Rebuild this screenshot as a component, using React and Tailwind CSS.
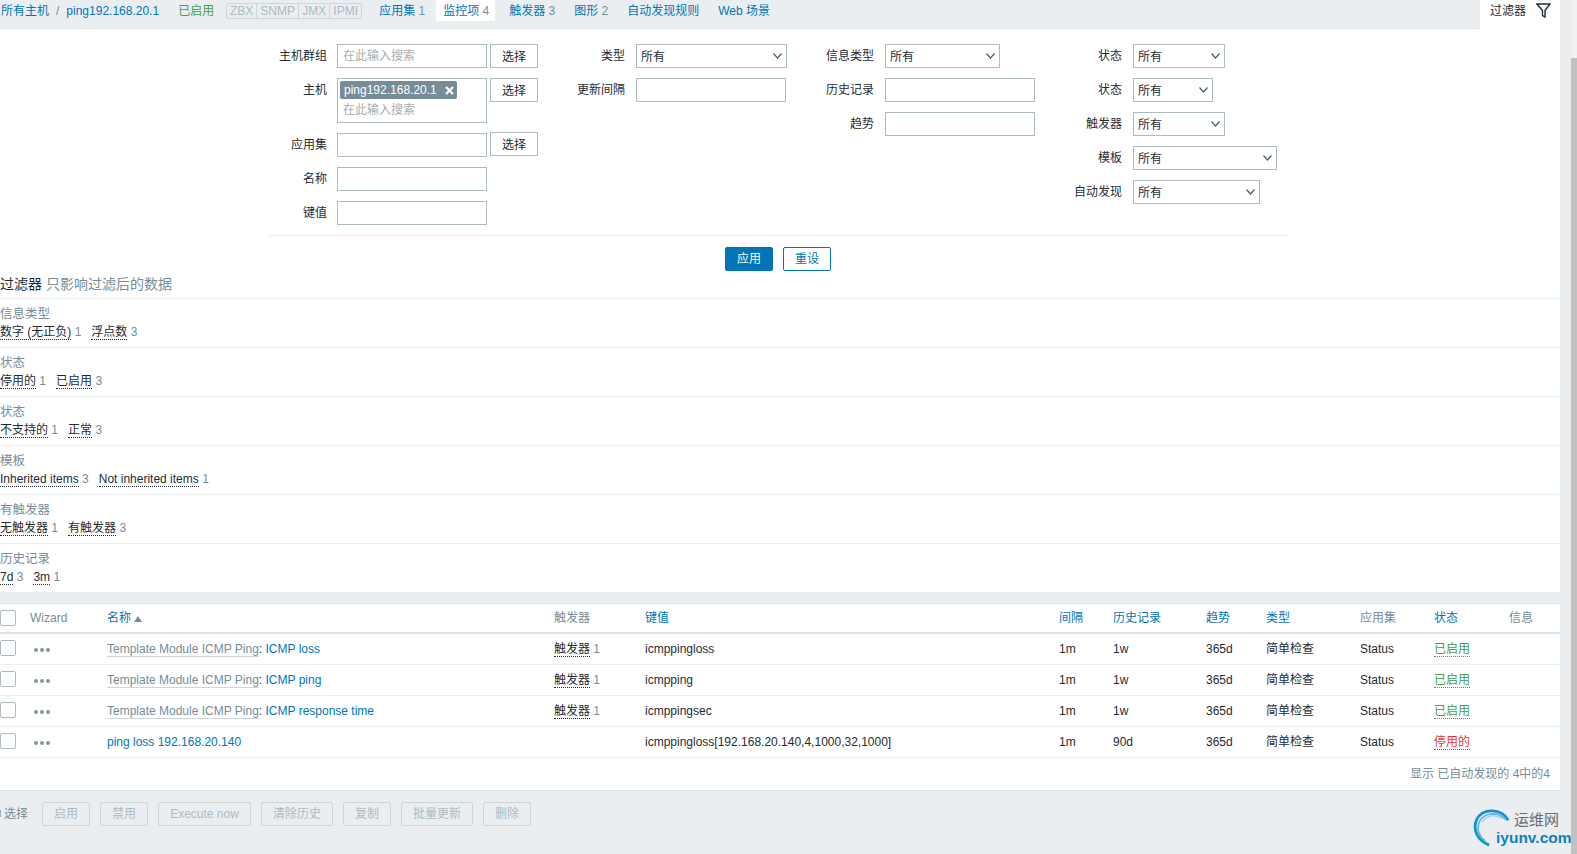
import React from "react";

const rows = [
  { prefix: "Template Module ICMP Ping", name: "ICMP loss", key: "icmppingloss", triggers: 1, history: "1w", on: true },
  { prefix: "Template Module ICMP Ping", name: "ICMP ping", key: "icmpping", triggers: 1, history: "1w", on: true },
  { prefix: "Template Module ICMP Ping", name: "ICMP response time", key: "icmppingsec", triggers: 1, history: "1w", on: true },
  { name: "ping loss 192.168.20.140", key: "icmppingloss[192.168.20.140,4,1000,32,1000]", history: "90d", on: false },
];

const subfilters = [
  { label: "信息类型", items: [["数字 (无正负)", 1], ["浮点数", 3]] },
  { label: "状态", items: [["停用的", 1], ["已启用", 3]] },
  { label: "状态", items: [["不支持的", 1], ["正常", 3]] },
  { label: "模板", items: [["Inherited items", 3], ["Not inherited items", 1]] },
  { label: "有触发器", items: [["无触发器", 1], ["有触发器", 3]] },
  { label: "历史记录", items: [["7d", 3], ["3m", 1]] },
];

const Chevron = () => (
  <svg width="9" height="6" viewBox="0 0 9 6" fill="none" stroke="#4b5c66" strokeWidth="1.2">
    <polyline points="0.5,0.5 4.5,5 8.5,0.5" />
  </svg>
);

const Label = ({ width, children }) => (
  <div className={`${width} shrink-0 text-right leading-[24px] text-[#1f2c33]`}>{children}</div>
);

const Input = ({ placeholder, className = "w-[150px]" }) => (
  <div className={`${className} h-6 shrink-0 border border-[#acbbc2] bg-white px-[5px] leading-[22px] text-[#acacac]`}>
    {placeholder}
  </div>
);

const Select = ({ width }) => (
  <div className={`${width} flex h-6 shrink-0 items-center justify-between border border-[#acbbc2] bg-white pl-1 pr-[4px] text-[#1f2c33]`}>
    <span className="pt-px">所有</span>
    <Chevron />
  </div>
);

const PickButton = () => (
  <div className="ml-[3px] flex h-6 w-12 shrink-0 items-center justify-center border border-[#acbbc2] bg-white pt-px text-[#1f2c33]">
    选择
  </div>
);

const Field = ({ labelWidth, label, children, className = "mb-[10px]" }) => (
  <div className={`flex items-start ${className}`}>
    <Label width={labelWidth}>{label}</Label>
    {children}
  </div>
);

const DisabledButton = ({ width, children }) => (
  <div className={`${width} flex h-6 items-center justify-center rounded-[2px] border border-[#cdd5d9] text-[#acbbc2]`}>
    {children}
  </div>
);

const App = () => {
  return (
    <div className="flex h-[854px] w-[1577px] overflow-hidden bg-[#ebeef0] font-['Liberation_Sans','Noto_Sans_CJK_SC',sans-serif] text-xs">
      <div className="relative w-[1571px] shrink-0">
        <div className="w-[1560px]">
          {/* Host navigation */}
          <div className="flex h-[29px] border-b border-[#dfe4e7]">
            <div className="flex h-[21px] w-[1480px] items-center whitespace-nowrap">
              <span className="ml-px text-[#0275b8]">所有主机</span>
              <span className="ml-[7px] text-[#768d99]">/</span>
              <span className="ml-[7px] text-[#0275b8]">ping192.168.20.1</span>
              <span className="ml-[19px] text-[#429e47]">已启用</span>
              <div className="ml-[12px] flex h-[16px] w-[136px] rounded-[2px] border border-[#cdd5d9] text-[#acbbc2] [&>span]:flex [&>span]:items-center [&>span]:justify-center">
                <span className="w-[30px] border-r border-[#cdd5d9]">ZBX</span>
                <span className="w-[42px] border-r border-[#cdd5d9]">SNMP</span>
                <span className="w-[31px] border-r border-[#cdd5d9]">JMX</span>
                <span className="flex-1">IPMI</span>
              </div>
              <span className="ml-[17px] text-[#0275b8]">应用集 <span className="text-[#768d99]">1</span></span>
              <span className="ml-[11px] flex h-[21px] w-[59px] items-center justify-center bg-white pl-px text-[#0275b8]">
                <span>监控项 <span className="text-[#768d99]">4</span></span>
              </span>
              <span className="ml-[14px] text-[#0275b8]">触发器 <span className="text-[#768d99]">3</span></span>
              <span className="ml-[19px] text-[#0275b8]">图形 <span className="text-[#768d99]">2</span></span>
              <span className="ml-[19px] text-[#0275b8]">自动发现规则</span>
              <span className="ml-[19px] text-[#0275b8]">Web 场景</span>
            </div>
            <div className="-mb-px flex h-[29px] w-20 items-start bg-white pl-[10px] pt-[3px] text-[#1f2c33]">
              <span className="leading-[16px]">过滤器</span>
              <svg className="ml-[10px]" width="15" height="15" viewBox="0 0 15 15" fill="none" stroke="#1f2c33" strokeWidth="1.4">
                <path d="M1 1 H14 L9 7.5 V14 L6.5 12.5 V7.5 Z" />
              </svg>
            </div>
          </div>

          {/* Filter */}
          <div className="bg-white">
            <div className="flex h-[206px] pl-[269px] pt-[15px]">
              <div className="w-[271px]">
                <Field labelWidth="w-[58px]" label="主机群组">
                  <div className="ml-[10px] flex"><Input placeholder="在此输入搜索" /><PickButton /></div>
                </Field>
                <Field labelWidth="w-[58px]" label="主机" className="mb-[10px]">
                  <div className="ml-[10px] flex">
                    <div className="h-[45px] w-[150px] shrink-0 border border-[#acbbc2] pl-[2px] pt-[2px]">
                      <div className="flex h-[18px] w-[117px] items-center justify-between rounded-[2px] bg-[#768d99] pl-1 pr-[3px] text-white">
                        <span>ping192.168.20.1</span>
                        <svg width="9" height="9" viewBox="0 0 9 9" stroke="white" strokeWidth="2.2">
                          <path d="M1 1 L8 8 M8 1 L1 8" />
                        </svg>
                      </div>
                      <div className="pl-[3px] pt-px leading-[20px] text-[#acacac]">在此输入搜索</div>
                    </div>
                    <PickButton />
                  </div>
                </Field>
                <Field labelWidth="w-[58px]" label="应用集">
                  <div className="ml-[10px] flex"><Input /><div className="-mt-px"><PickButton /></div></div>
                </Field>
                <Field labelWidth="w-[58px]" label="名称">
                  <div className="ml-[10px]"><Input /></div>
                </Field>
                <Field labelWidth="w-[58px]" label="键值">
                  <div className="ml-[10px]"><Input /></div>
                </Field>
              </div>
              <div className="w-[250px]">
                <Field labelWidth="w-[85px]" label="类型">
                  <div className="ml-[11px]"><Select width="w-[151px]" /></div>
                </Field>
                <Field labelWidth="w-[85px]" label="更新间隔">
                  <div className="ml-[11px]"><Input className="w-[150px]" /></div>
                </Field>
              </div>
              <div className="w-[250px]">
                <Field labelWidth="w-[84px]" label="信息类型">
                  <div className="ml-[11px]"><Select width="w-[115px]" /></div>
                </Field>
                <Field labelWidth="w-[84px]" label="历史记录">
                  <div className="ml-[11px]"><Input /></div>
                </Field>
                <Field labelWidth="w-[84px]" label="趋势">
                  <div className="ml-[11px]"><Input /></div>
                </Field>
              </div>
              <div>
                <Field labelWidth="w-[82px]" label="状态">
                  <div className="ml-[11px]"><Select width="w-[92px]" /></div>
                </Field>
                <Field labelWidth="w-[82px]" label="状态">
                  <div className="ml-[11px]"><Select width="w-[80px]" /></div>
                </Field>
                <Field labelWidth="w-[82px]" label="触发器">
                  <div className="ml-[11px]"><Select width="w-[92px]" /></div>
                </Field>
                <Field labelWidth="w-[82px]" label="模板">
                  <div className="ml-[11px]"><Select width="w-[144px]" /></div>
                </Field>
                <Field labelWidth="w-[82px]" label="自动发现">
                  <div className="ml-[11px]"><Select width="w-[127px]" /></div>
                </Field>
              </div>
            </div>

            <div className="ml-[269px] mr-[272px] h-px bg-[#ebeef0]" />
            <div className="flex h-[35px] items-end pl-[725px]">
              <div className="flex h-6 w-12 items-center justify-center rounded-[2px] bg-[#0275b8] text-white">应用</div>
              <div className="ml-[10px] flex h-6 w-12 items-center justify-center rounded-[2px] border border-[#0275b8] text-[#0275b8]">重设</div>
            </div>

            {/* Subfilter */}
            <div className="flex h-[28px] items-end border-b border-[#ebeef0] pb-[5px] text-sm leading-[18px]">
              <span className="text-[#1f2c33]">过滤器</span>
              <span className="ml-1 text-[#768d99]">只影响过滤后的数据</span>
            </div>
            {subfilters.map((group, i) => (
              <div key={i} className="h-[49px] border-b border-[#ebeef0] pt-[7px]">
                <div className="text-[12.5px] leading-[17px] text-[#768d99]">{group.label}</div>
                <div className="flex leading-[15px]">
                  {group.items.map(([text, count]) => (
                    <span key={text} className="mr-[10px] mt-[2px] whitespace-nowrap text-[#768d99]">
                      <span className="border-b border-dotted border-[#1f2c33] text-[#1f2c33]">{text}</span> {count}
                    </span>
                  ))}
                </div>
              </div>
            ))}
          </div>

          {/* Items table */}
          <div className="mt-[10px] border-t border-[#dfe4e7] bg-white">
            <table className="w-full table-fixed border-collapse text-left">
              <colgroup>
                <col className="w-[30px]" />
                <col className="w-[77px]" />
                <col className="w-[447px]" />
                <col className="w-[91px]" />
                <col className="w-[414px]" />
                <col className="w-[54px]" />
                <col className="w-[93px]" />
                <col className="w-[60px]" />
                <col className="w-[94px]" />
                <col className="w-[74px]" />
                <col className="w-[75px]" />
                <col className="w-[51px]" />
              </colgroup>
              <thead>
                <tr className="h-[29px] border-b-2 border-[#dfe4e7] font-normal">
                  <th className="p-0 font-normal">
                    <div className="h-4 w-4 rounded-[2px] border border-[#acbbc2]" />
                  </th>
                  <th className="p-0 font-normal text-[#768d99]">Wizard</th>
                  <th className="p-0 font-normal text-[#0275b8]">
                    名称
                    <svg className="ml-[3px] inline-block" width="8" height="6" viewBox="0 0 8 6" fill="#768d99">
                      <path d="M4 0 L8 6 H0 Z" />
                    </svg>
                  </th>
                  <th className="p-0 font-normal text-[#768d99]">触发器</th>
                  <th className="p-0 font-normal text-[#0275b8]">键值</th>
                  <th className="p-0 font-normal text-[#0275b8]">间隔</th>
                  <th className="p-0 font-normal text-[#0275b8]">历史记录</th>
                  <th className="p-0 font-normal text-[#0275b8]">趋势</th>
                  <th className="p-0 font-normal text-[#0275b8]">类型</th>
                  <th className="p-0 font-normal text-[#768d99]">应用集</th>
                  <th className="p-0 font-normal text-[#0275b8]">状态</th>
                  <th className="p-0 font-normal text-[#768d99]">信息</th>
                </tr>
              </thead>
              <tbody className="text-[#1f2c33]">
                {rows.map((row) => (
                  <tr key={row.name} className="h-[31px] border-b border-[#ebeef0]">
                    <td className="p-0">
                      <div className="-mt-[2px] h-4 w-4 rounded-[2px] border border-[#acbbc2]" />
                    </td>
                    <td className="p-0">
                      <div className="ml-[4px] mt-[2px] flex gap-[2px]">
                        <span className="h-1 w-1 rounded-full bg-[#8496a1]" />
                        <span className="h-1 w-1 rounded-full bg-[#8496a1]" />
                        <span className="h-1 w-1 rounded-full bg-[#8496a1]" />
                      </div>
                    </td>
                    <td className="p-0 whitespace-nowrap text-[#0275b8]">
                      {row.prefix && (
                        <>
                          <span className="border-b border-[#cdd5d9] text-[#768d99]">{row.prefix}</span>
                          <span className="text-[#1f2c33]">: </span>
                        </>
                      )}
                      {row.name}
                    </td>
                    <td className="p-0 text-[#768d99]">
                      {row.triggers && (
                        <>
                          <span className="border-b border-dotted border-[#1f2c33] text-[#1f2c33]">触发器</span> {row.triggers}
                        </>
                      )}
                    </td>
                    <td className="p-0">{row.key}</td>
                    <td className="p-0">1m</td>
                    <td className="p-0">{row.history}</td>
                    <td className="p-0">365d</td>
                    <td className="p-0">简单检查</td>
                    <td className="p-0">Status</td>
                    <td className="p-0">
                      {row.on ? (
                        <span className="border-b border-dotted border-[#429e47] text-[#429e47]">已启用</span>
                      ) : (
                        <span className="border-b border-dotted border-[#e33734] text-[#e33734]">停用的</span>
                      )}
                    </td>
                    <td className="p-0" />
                  </tr>
                ))}
              </tbody>
            </table>
            <div className="flex h-[33px] items-center justify-end border-b border-[#dfe4e7] pr-[10px] text-[#768d99]">
              显示 已自动发现的 4中的4
            </div>
          </div>

          {/* Mass actions */}
          <div className="flex items-center pt-[11px] text-[#768d99]">
            <span className="h-[7px] w-px bg-[#9fb0b9]" />
            <span className="ml-[3px] mr-[14px] whitespace-nowrap">选择</span>
            <div className="flex gap-[10px]">
              <DisabledButton width="w-12">启用</DisabledButton>
              <DisabledButton width="w-12">禁用</DisabledButton>
              <DisabledButton width="w-[93px]">Execute now</DisabledButton>
              <DisabledButton width="w-[72px]">清除历史</DisabledButton>
              <DisabledButton width="w-12">复制</DisabledButton>
              <DisabledButton width="w-[72px]">批量更新</DisabledButton>
              <DisabledButton width="w-12">删除</DisabledButton>
            </div>
          </div>
        </div>

        {/* Watermark */}
        <div className="absolute left-[1472px] top-[806px] h-[42px] w-[99px]">
          <svg className="absolute left-0 top-0" width="40" height="42" viewBox="0 0 42 42" fill="none" stroke="#1a8fd1">
            <path d="M38 14 C32 2 12 0 5 13 C0 24 6 35 18 40" strokeWidth="3" />
            <path d="M35 13 C28 5 14 5 8 15 C4 24 8 32 14 36" strokeWidth="1.8" stroke="#5fb4e2" />
            <path d="M31 12 C24 7 15 9 11 16" strokeWidth="1.2" stroke="#8ccaec" />
          </svg>
          <span className="absolute left-[42px] top-[5px] whitespace-nowrap text-[15px] leading-[18px] text-[#6b6b6b]">运维网</span>
          <span className="absolute left-[24px] top-[23px] whitespace-nowrap text-[15.5px] font-bold leading-[18px] text-[#0f7fc4]">iyunv.com</span>
        </div>
      </div>

      {/* Scrollbar */}
      <div className="flex w-[6px] shrink-0 flex-col bg-[#f1f1f1] pt-[58px]">
        <div className="flex-1 bg-[#c1c1c1]" />
      </div>
    </div>
  );
};

export default App;
